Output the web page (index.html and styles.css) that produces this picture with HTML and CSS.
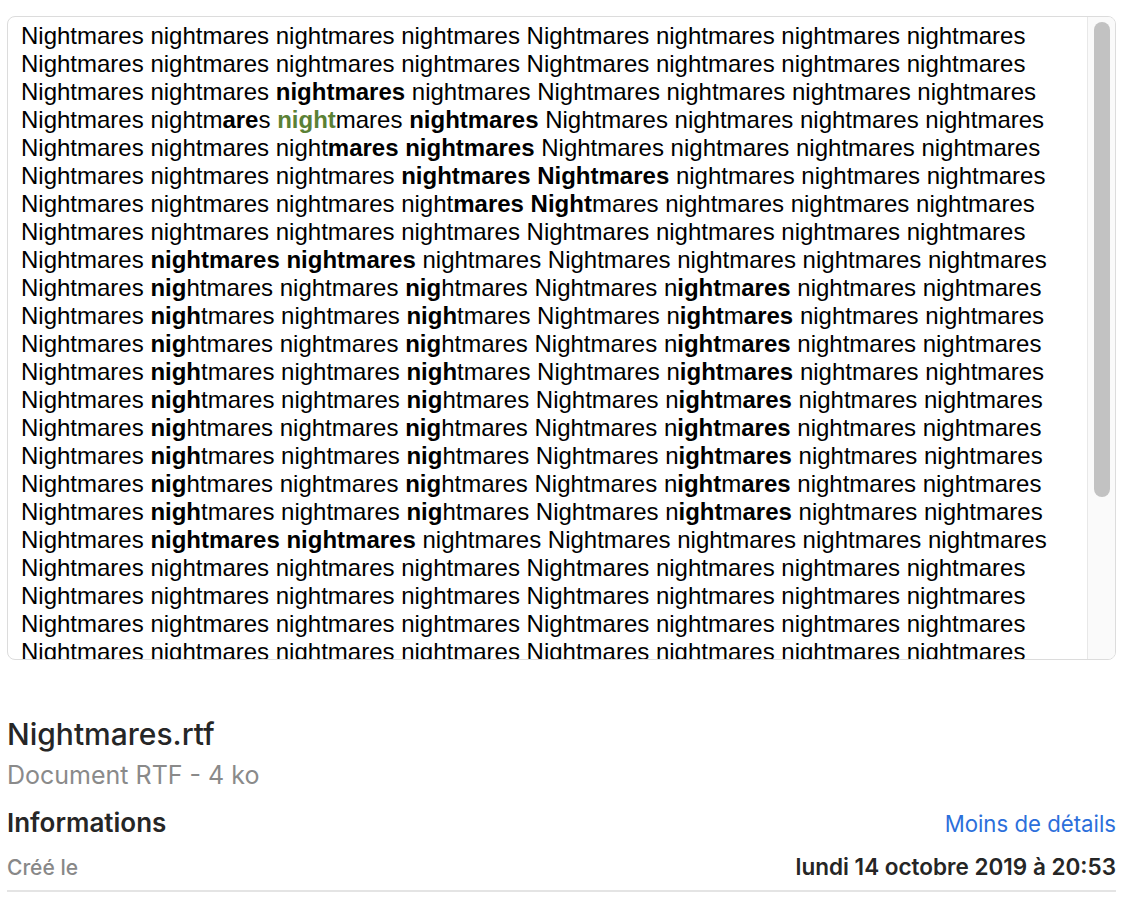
FILE: index.html
```html
<!DOCTYPE html>
<html lang="fr">
<head>
<meta charset="UTF-8">
<title>Nightmares.rtf</title>
<link rel="stylesheet" href="styles.css">
</head>
<body>
<div class="preview">
    <div class="doc">
        <div>Nightmares nightmares nightmares nightmares Nightmares nightmares nightmares nightmares</div>
        <div>Nightmares nightmares nightmares nightmares Nightmares nightmares nightmares nightmares</div>
        <div>Nightmares nightmares <b>nightmares</b> nightmares Nightmares nightmares nightmares nightmares</div>
        <div>Nightmares nightm<b>are</b>s <b class="green">night</b>mares <b>nightmares</b> Nightmares nightmares nightmares nightmares</div>
        <div>Nightmares nightmares night<b>mares nightmares</b> Nightmares nightmares nightmares nightmares</div>
        <div>Nightmares nightmares nightmares <b>nightmares Nightmares</b> nightmares nightmares nightmares</div>
        <div>Nightmares nightmares nightmares night<b>mares Night</b>mares nightmares nightmares nightmares</div>
        <div>Nightmares nightmares nightmares nightmares Nightmares nightmares nightmares nightmares</div>
        <div>Nightmares <b>nightmares nightmares</b> nightmares Nightmares nightmares nightmares nightmares</div>
        <div>Nightmares <b>nig</b>htmares nightmares <b>nig</b>htmares Nightmares n<b>ight</b>m<b>ares</b> nightmares nightmares</div>
        <div>Nightmares <b>nigh</b>tmares nightmares <b>nigh</b>tmares Nightmares n<b>ight</b>m<b>ares</b> nightmares nightmares</div>
        <div>Nightmares <b>nig</b>htmares nightmares <b>nig</b>htmares Nightmares n<b>ight</b>m<b>ares</b> nightmares nightmares</div>
        <div>Nightmares <b>nigh</b>tmares nightmares <b>nigh</b>tmares Nightmares n<b>ight</b>m<b>ares</b> nightmares nightmares</div>
        <div>Nightmares <b>nigh</b>tmares nightmares <b>nig</b>htmares Nightmares n<b>ight</b>m<b>ares</b> nightmares nightmares</div>
        <div>Nightmares <b>nig</b>htmares nightmares <b>nig</b>htmares Nightmares n<b>ight</b>m<b>ares</b> nightmares nightmares</div>
        <div>Nightmares <b>nigh</b>tmares nightmares <b>nig</b>htmares Nightmares n<b>ight</b>m<b>ares</b> nightmares nightmares</div>
        <div>Nightmares <b>nig</b>htmares nightmares <b>nig</b>htmares Nightmares n<b>ight</b>m<b>ares</b> nightmares nightmares</div>
        <div>Nightmares <b>nigh</b>tmares nightmares <b>nig</b>htmares Nightmares n<b>ight</b>m<b>ares</b> nightmares nightmares</div>
        <div>Nightmares <b>nightmares nightmares</b> nightmares Nightmares nightmares nightmares nightmares</div>
        <div>Nightmares nightmares nightmares nightmares Nightmares nightmares nightmares nightmares</div>
        <div>Nightmares nightmares nightmares nightmares Nightmares nightmares nightmares nightmares</div>
        <div>Nightmares nightmares nightmares nightmares Nightmares nightmares nightmares nightmares</div>
        <div>Nightmares nightmares nightmares nightmares Nightmares nightmares nightmares nightmares</div>
    </div>
    <div class="track"><div class="thumb"></div></div>
</div>

<div class="info">
    <h1 class="file-name">Nightmares.rtf</h1>
    <p class="file-kind">Document RTF - 4 ko</p>
    <div class="section-head">
        <h2>Informations</h2>
        <a href="#" class="toggle">Moins de détails</a>
    </div>
    <div class="row">
        <span class="label">Créé le</span>
        <span class="value">lundi 14 octobre 2019 à 20:53</span>
    </div>
</div>
</body>
</html>
```

FILE: styles.css
```css
body {
    margin: 0;
    background-color: #fff;
    font-family: Inter, "Liberation Sans", sans-serif;
    color: #262626;
}
.preview {
    display: flex;
    height: 644px;
    margin: 16px 18px 0 7px;
    border: 1px solid #dcdcdc;
    border-radius: 8px;
    overflow: hidden;
    box-sizing: border-box;
}
.doc {
    flex: 1;
    padding: 5px 13px 0;
    overflow: hidden;
    font-family: "Liberation Sans", Arial, sans-serif;
    font-size: 24px;
    line-height: 28px;
    color: #000;
    white-space: nowrap;
}
.doc b {
    font-weight: bold;
}
.doc .green {
    color: #5b8136;
}
.track {
    width: 28px;
    padding: 5px 5px 0 6px;
    box-sizing: border-box;
    border-left: 1px solid #e8e8e8;
    background-color: #fafafa;
}
.thumb {
    height: 475px;
    background-color: #c2c2c2;
    border-radius: 8px;
}
.info {
    margin: 0 18px 0 7px;
    padding-top: 56px;
}
.file-name {
    margin: 0;
    font-size: 30px;
    line-height: 36px;
    font-weight: 500;
}
.file-kind {
    margin: 8px 0 0;
    font-size: 25px;
    line-height: 30px;
    color: #8a8a8a;
}
.section-head {
    display: flex;
    justify-content: space-between;
    align-items: baseline;
    margin-top: 17px;
    line-height: 32px;
}
.section-head h2 {
    margin: 0;
    font-size: 26px;
    font-weight: 600;
}
.toggle {
    font-size: 22.2px;
    color: #2c6fdb;
    text-decoration: none;
}
.row {
    display: flex;
    justify-content: space-between;
    align-items: baseline;
    margin-top: 13px;
    padding-bottom: 8px;
    line-height: 28px;
    border-bottom: 2px solid #e4e4e4;
}
.label {
    font-size: 21px;
    font-weight: 500;
    color: #888;
}
.value {
    font-size: 22.5px;
    font-weight: 600;
    color: #262626;
}
```
